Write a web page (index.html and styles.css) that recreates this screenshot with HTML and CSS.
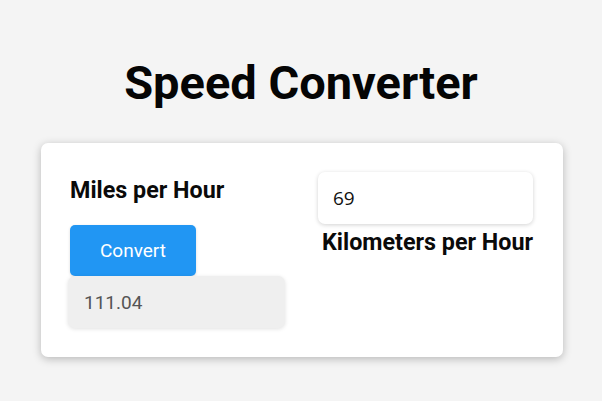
FILE: index.html
```html
<!DOCTYPE html>
<html>
<head>
<meta charset="utf-8">
<link rel="stylesheet" href="styles.css">
</head>
<body>
<h1 class="title">Speed Converter</h1>
<div class="card">
  <div class="col col-left">
    <h2 class="label label-mph">Miles per Hour</h2>
    <button class="btn">Convert</button>
    <div class="output">111.04</div>
  </div>
  <div class="col col-right">
    <div class="input">69</div>
    <h2 class="label label-kph">Kilometers per Hour</h2>
  </div>
</div>
</body>
</html>
```
FILE: styles.css
```css
html, body {
  margin: 0;
  padding: 0;
  background: #f4f4f4;
  font-family: Roboto, "Liberation Sans", sans-serif;
  color: #000;
}
body {
  width: 602px;
  height: 401px;
  overflow: hidden;
}
.title {
  margin: 0;
  padding-top: 55px;
  height: 56px;
  text-align: center;
  font-size: 47px;
  font-weight: 700;
  line-height: 56px;
  color: #050505;
}
.card {
  margin: 32px 0 0 41px;
  width: 522px;
  height: 214px;
  box-sizing: border-box;
  background: #fff;
  border-radius: 7px;
  box-shadow: 0 2px 8px rgba(0,0,0,0.25);
  display: grid;
  grid-template-columns: 248px 215px;
  padding: 29px 0 0 27px;
}
.col {
  display: flex;
  flex-direction: column;
}
.label {
  margin: 0;
  font-size: 23.3px;
  font-weight: 700;
  line-height: 27px;
  color: #0a0a0a;
  white-space: nowrap;
}
.label-mph {
  margin: 5px 0 0 2px;
}
.btn {
  margin: 21px 0 0 2px;
  width: 126px;
  height: 51px;
  border: none;
  border-radius: 5px;
  background: #2196f3;
  color: #fff;
  font-family: Roboto, "Liberation Sans", sans-serif;
  font-size: 19px;
  padding: 0;
  box-shadow: 0 1px 3px rgba(0,0,0,0.15);
}
.output {
  width: 217px;
  height: 52px;
  box-sizing: border-box;
  background: #efefef;
  border-radius: 7px;
  box-shadow: 0 1px 4px rgba(0,0,0,0.12);
  padding-left: 16px;
  display: flex;
  align-items: center;
  font-family: Roboto, "Liberation Sans", sans-serif;
  font-size: 19px;
  color: #555;
}
.col-right {
  padding-left: 2px;
}
.input {
  width: 215px;
  height: 52px;
  box-sizing: border-box;
  background: #fff;
  border-radius: 7px;
  box-shadow: 0 1px 4px rgba(0,0,0,0.18);
  padding-left: 15px;
  display: flex;
  align-items: center;
  font-family: "Open Sans", "Noto Sans", sans-serif;
  font-size: 19px;
  color: #111;
}
.label-kph {
  margin: 5px 0 0 4px;
}
```
